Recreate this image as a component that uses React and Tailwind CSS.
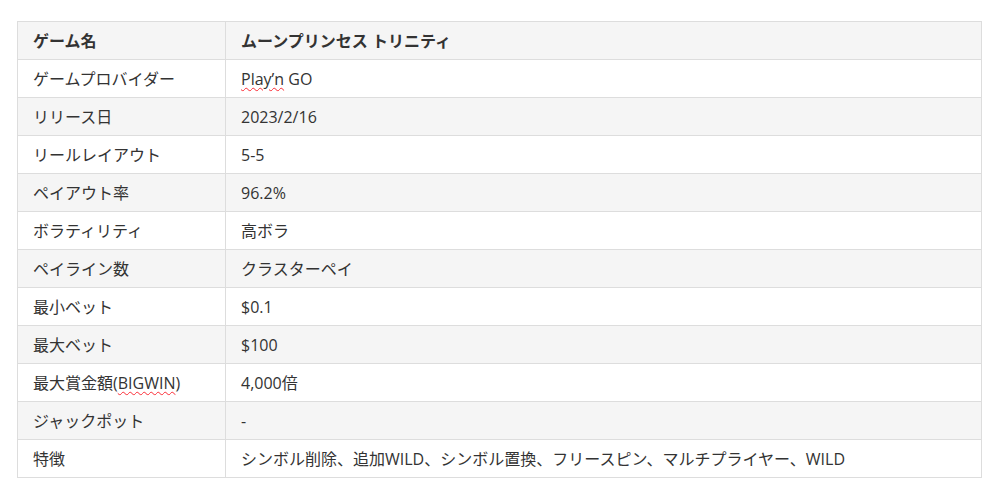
const rows = [
  ["ゲームプロバイダー", "Play'n GO"],
  ["リリース日", "2023/2/16"],
  ["リールレイアウト", "5-5"],
  ["ペイアウト率", "96.2%"],
  ["ボラティリティ", "高ボラ"],
  ["ペイライン数", "クラスターペイ"],
  ["最小ベット", "$0.1"],
  ["最大ベット", "$100"],
  ["最大賞金額(BIGWIN)", "4,000倍"],
  ["ジャックポット", "-"],
  ["特徴", "シンボル削除、追加WILD、シンボル置換、フリースピン、マルチプライヤー、WILD"],
];

const squiggle = "underline decoration-wavy decoration-red-500 decoration-1 underline-offset-2";

function Cell({ text }) {
  if (text === "Play'n GO") {
    return (
      <>
        <span className={squiggle}>Play’n</span> GO
      </>
    );
  }
  if (text === "最大賞金額(BIGWIN)") {
    return (
      <>
        最大賞金額(<span className={squiggle}>BIGWIN</span>)
      </>
    );
  }
  return text;
}

export default function App() {
  return (
    <div
      className="min-h-[491px] bg-white pt-[21px] pl-[17px] text-[16px] text-[#333333]"
      style={{ fontFamily: '"Open Sans", "Noto Sans CJK JP", sans-serif' }}
    >
      <table className="w-[965px] table-fixed border-collapse">
        <colgroup>
          <col className="w-[208px]" />
          <col />
        </colgroup>
        <tbody>
          <tr className="bg-[#f5f5f5] font-bold">
            <td className="h-[38px] border border-[#dddddd] px-[15px] py-0">ゲーム名</td>
            <td className="h-[38px] border border-[#dddddd] px-[15px] py-0">ムーンプリンセス トリニティ</td>
          </tr>
          {rows.map(([k, v], i) => (
            <tr key={k} className={i % 2 === 1 ? "bg-[#f5f5f5]" : "bg-white"}>
              <td className="h-[38px] border border-[#dddddd] px-[15px] py-0">
                <Cell text={k} />
              </td>
              <td className="h-[38px] border border-[#dddddd] px-[15px] py-0">
                <Cell text={v} />
              </td>
            </tr>
          ))}
        </tbody>
      </table>
    </div>
  );
}
